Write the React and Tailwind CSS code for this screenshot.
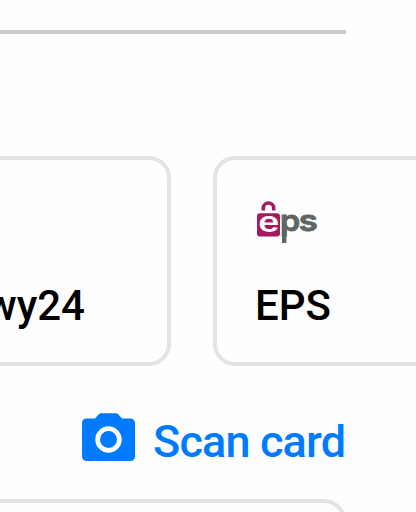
function EpsLogo() {
  return (
    <svg className="block h-[44px] w-[64px]" viewBox="256 200 64 44" role="img" aria-label="eps">
      <path d="M263.3 210.5v-2.3a5.2 5.2 0 0 1 10.4 0v2.3" fill="none" stroke="#a5195f" strokeWidth="3.6" />
      <rect x="257" y="213.2" width="23" height="23.3" rx="3" fill="#a5195f" />
      <g fontFamily="Inter, sans-serif">
        <text transform="translate(258.2 232) scale(1.25 1)" fontSize="28.5" fontWeight="600" fill="#fff">e</text>
        <g fill="#5f6663" stroke="#5f6663" strokeWidth="0.8">
          <text transform="translate(280 231.4) scale(1.12 1)" fontSize="29" fontWeight="600">p</text>
          <text transform="translate(298.8 231.4) scale(1.2 1)" fontSize="29" fontWeight="600">s</text>
        </g>
        <rect x="282" y="223" width="4.4" height="20" fill="#5f6663" />
      </g>
    </svg>
  );
}

function Camera() {
  return (
    <svg className="block h-[48px] w-[53px] shrink-0" viewBox="82 413 53 48" aria-hidden="true">
      <path d="M101 413.2h15a3 3 0 0 1 2.2 1l3.8 4.3h8.5a4.5 4.5 0 0 1 4.5 4.5v33.5a4.5 4.5 0 0 1-4.5 4.5h-44a4.5 4.5 0 0 1-4.5-4.5V423a4.5 4.5 0 0 1 4.5-4.5H95l3.8-4.3a3 3 0 0 1 2.2-1z" fill="#007aff" />
      <circle cx="108.5" cy="439.5" r="10.85" fill="none" stroke="#fff" strokeWidth="4.7" />
    </svg>
  );
}

export default function App() {
  return (
    <main className="h-[512px] w-[416px] overflow-hidden bg-[#fefefe] font-['Roboto',sans-serif] font-medium text-black">
      <div className="pt-[30px]">
        <div className="h-1 w-[346px] rounded-r-[1px] bg-[#cacaca]" />
      </div>
      <div className="mt-[122px] flex h-[210px] gap-[42px]">
        <div className="flex w-[171px] shrink-0 flex-col items-end justify-end rounded-r-[22px] border-4 border-l-0 border-[#e3e3e5] pr-[82px] pb-[31px]">
          <span className="text-[42px] leading-[50px] whitespace-nowrap">Przelewy24</span>
        </div>
        <div className="flex w-[300px] shrink-0 flex-col rounded-[22px] border-4 border-[#e3e3e5] pt-[40px] pl-[39px]">
          <EpsLogo />
          <span className="-ml-px mt-[37px] text-[42px] leading-[50px]">EPS</span>
        </div>
      </div>
      <div className="mt-[47px] flex h-[48px] w-[346px] pl-[82px] text-[#007aff]">
        <Camera />
        <span className="mt-[2px] ml-[18px] text-[45px] leading-[54px] tracking-[-0.85px] whitespace-nowrap">Scan card</span>
      </div>
      <div className="mt-[38px] h-[80px] w-[346px] rounded-tr-[22px] border-4 border-l-0 border-[#e3e3e5]" />
    </main>
  );
}
